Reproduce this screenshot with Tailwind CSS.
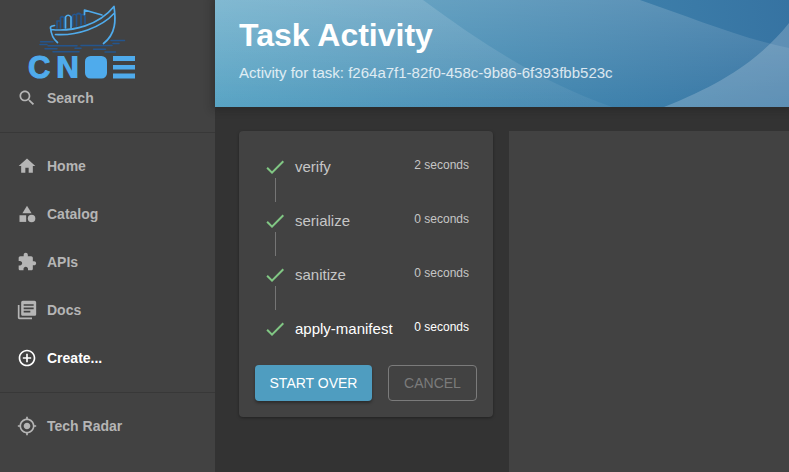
<!DOCTYPE html>
<html lang="en">
<head>
<meta charset="utf-8">
<meta name="viewport" content="width=device-width, initial-scale=1">
<title>Task Activity</title>
<script src="https://cdn.jsdelivr.net/npm/@tailwindcss/browser@4"></script>
</head>
<body class="flex min-h-screen overflow-x-hidden bg-[#333333] font-['Liberation_Sans',Arial,sans-serif] text-sm text-white">

<aside class="w-[215px] shrink-0 bg-[#424242] font-bold text-[#b5b5b5]">
  <a href="#" aria-label="CNOE" class="block h-[74px]">
    <svg class="block overflow-visible" width="150" height="80" viewBox="0 0 150 80" fill="none" stroke-width="1.7" stroke-linecap="round" stroke-linejoin="round">
      <g stroke="#24558d">
        <path d="M57 28V21h3M60.500 28V17.500q1.500-1.500 3.500 0V28M72.500 26V15.500q2-2.500 4 0V26M76.500 14.500q2-2 4.500 0V25M81 15q3-1.500 4 1.500v7"/>
        <path stroke-width="1.500" d="M40.500 41.800h12.500M40 44.500h7M48 45.700h29M81 45.500h31M45 48.700h12M75 48.300h6M53 51.800h26M93.500 49.200h12M105 52h10.500M111 40.500h13.500M113 43.500h6"/>
      </g>
      <g stroke="#4fabec">
        <path d="M50.500 27.500C51 34 53 39 57.500 42.500M54.500 25.500l-3 .8q-1.500.7-1 2.200M51 29.500C73 32 99 25 114 6.500C116 20 116 34 103.500 43.500M55.500 34.500C76 36 101 28 114.500 13"/>
        <path d="M65.500 28V17q2.500-3.500 5.500 0V28M84.500 14.500V10l17.500 5"/>
      </g>
      <g fill="#4fabec">
        <text x="28" y="78" font-family="Liberation Sans, Arial, sans-serif" font-size="31" font-weight="700" stroke="#4fabec" stroke-width="1">C</text>
        <text x="55" y="78" font-family="DejaVu Sans, sans-serif" font-size="30" font-weight="700">N</text>
        <rect x="85" y="56" width="22" height="22.500" rx="5.500"/>
        <rect x="113" y="56" width="22" height="5"/>
        <rect x="113" y="65" width="22" height="4.500"/>
        <rect x="113" y="73.500" width="22" height="5"/>
      </g>
    </svg>
  </a>
  <button type="button" class="flex h-12 w-full items-center gap-2.5 pl-[17px] font-bold">
    <svg class="size-5" viewBox="0 0 24 24" fill="currentColor"><path d="M15.500 14h-.79l-.28-.27C15.410 12.590 16 11.110 16 9.500 16 5.910 13.090 3 9.500 3S3 5.910 3 9.500 5.910 16 9.500 16c1.610 0 3.090-.59 4.230-1.570l.27.28v.79l5 4.990L20.490 19l-4.990-5zm-6 0C7.010 14 5 11.990 5 9.500S7.010 5 9.500 5 14 7.010 14 9.500 11.990 14 9.500 14z"/></svg>
    Search
  </button>
  <hr class="mt-2.5 h-2.5 border-t border-[#383838]">
  <nav aria-label="Main">
    <a href="#" class="flex h-12 items-center gap-2.5 pl-[17px]">
      <svg class="size-5" viewBox="0 0 24 24" fill="currentColor"><path d="M10 20v-6h4v6h5v-8h3L12 3 2 12h3v8z"/></svg>
      Home
    </a>
    <a href="#" class="flex h-12 items-center gap-2.5 pl-[17px]">
      <svg class="size-5" viewBox="0 0 24 24" fill="currentColor"><path d="M12 2l-5.500 9h11z"/><circle cx="17.500" cy="17.500" r="4.500"/><path d="M3 13.500h8v8H3z"/></svg>
      Catalog
    </a>
    <a href="#" class="flex h-12 items-center gap-2.5 pl-[17px]">
      <svg class="size-5" viewBox="0 0 24 24" fill="currentColor"><path d="M20.500 11H19V7c0-1.100-.9-2-2-2h-4V3.500C13 2.120 11.880 1 10.500 1S8 2.120 8 3.500V5H4c-1.100 0-1.990.9-1.990 2v3.800H3.500c1.490 0 2.700 1.210 2.700 2.700s-1.210 2.700-2.700 2.700H2V20c0 1.100.9 2 2 2h3.800v-1.500c0-1.490 1.210-2.700 2.700-2.700 1.490 0 2.700 1.210 2.700 2.700V22H17c1.100 0 2-.9 2-2v-4h1.500c1.380 0 2.500-1.120 2.500-2.500S21.880 11 20.500 11z"/></svg>
      APIs
    </a>
    <a href="#" class="flex h-12 items-center gap-2.5 pl-[17px]">
      <svg class="size-5" viewBox="0 0 24 24" fill="currentColor"><path d="M3 6H1v15c0 1.100.9 2 2 2h15v-2H3V6z"/><path d="M21 1H7c-1.100 0-2 .9-2 2v14c0 1.100.9 2 2 2h14c1.100 0 2-.9 2-2V3c0-1.100-.9-2-2-2zm-1 10H8V9h12v2zm-4 4H8v-2h8v2zm4-8H8V5h12v2z"/></svg>
      Docs
    </a>
    <a href="#" aria-current="page" class="flex h-12 items-center gap-2.5 pl-[17px] text-white">
      <svg class="size-5" viewBox="0 0 24 24" fill="currentColor"><path d="M13 7h-2v4H7v2h4v4h2v-4h4v-2h-4V7zm-1-5C6.480 2 2 6.480 2 12s4.480 10 10 10 10-4.480 10-10S17.520 2 12 2zm0 18c-4.410 0-8-3.590-8-8s3.590-8 8-8 8 3.590 8 8-3.590 8-8 8z"/></svg>
      Create...
    </a>
    <hr class="mt-2.5 h-2.5 border-t border-[#383838]">
    <a href="#" class="flex h-12 items-center gap-2.5 pl-[17px]">
      <svg class="size-5" viewBox="0 0 24 24" fill="currentColor"><path d="M12 8c-2.210 0-4 1.790-4 4s1.790 4 4 4 4-1.790 4-4-1.790-4-4-4zm8.940 3c-.46-4.170-3.770-7.480-7.940-7.940V1h-2v2.060C6.830 3.520 3.520 6.830 3.060 11H1v2h2.060c.46 4.170 3.770 7.480 7.940 7.940V23h2v-2.060c4.170-.46 7.480-3.770 7.940-7.940H23v-2h-2.060zM12 19c-3.870 0-7-3.130-7-7s3.130-7 7-7 7 3.130 7 7-3.130 7-7 7z"/></svg>
      Tech Radar
    </a>
  </nav>
</aside>

<div class="flex min-w-0 flex-1 flex-col">
  <header class="relative bg-[#4589b3] px-6 pt-4 pb-6 shadow-[0_0_8px_3px_rgba(20,20,20,0.3)]">
    <svg class="absolute inset-0 size-full" viewBox="0 0 574 107" preserveAspectRatio="none" aria-hidden="true">
      <defs>
        <linearGradient id="base" gradientUnits="userSpaceOnUse" x1="0" y1="107" x2="574" y2="0">
          <stop offset="0" stop-color="#509fc1"/><stop offset="1" stop-color="#3673a2"/>
        </linearGradient>
        <linearGradient id="fade" x1="0" y1="0" x2="0" y2="1">
          <stop offset="0" stop-color="#fff" stop-opacity=".17"/><stop offset="1" stop-color="#fff" stop-opacity="0"/>
        </linearGradient>
        <linearGradient id="fade2" x1="0" y1="0" x2="0" y2="1">
          <stop offset="0" stop-color="#fff" stop-opacity=".14"/><stop offset="1" stop-color="#fff" stop-opacity=".05"/>
        </linearGradient>
      </defs>
      <path fill="url(#base)" d="M0 0H574V107H0z"/>
      <path fill="url(#fade)" d="M0 0H425C475 17 525 38 574 48V107H0z"/>
      <path fill="url(#fade2)" d="M0 0H208C270 46 330 84 397 107H0z"/>
      <path fill="#fff" fill-opacity=".2" d="M449 107C510 83 547 57 574 23V107z"/>
    </svg>
    <div class="relative">
      <h1 class="text-[32px] leading-[38px] font-bold">Task Activity</h1>
      <p class="mt-2 leading-[21px] text-[15px] text-white/80">Activity for task: f264a7f1-82f0-458c-9b86-6f393fbb523c</p>
    </div>
  </header>

  <main class="flex flex-1 items-start gap-4 pt-6 pl-6">
    <section aria-label="Steps" class="w-[254px] shrink-0 rounded bg-[#424242] pb-4 shadow-[0_1px_3px_rgba(0,0,0,0.35)]">
      <ol class="px-6 pt-6 pb-6 text-[15px] text-[#c6c6c6]">
        <li>
          <div class="flex h-6 items-center gap-2">
            <svg class="size-6 text-[#81c784]" viewBox="0 0 24 24" fill="currentColor"><path d="M9 16.170L4.830 12l-1.420 1.410L9 19 21 7l-1.410-1.410z"/></svg>
            <span class="flex-1">verify</span><span class="self-start text-xs leading-5">2 seconds</span>
          </div>
          <div class="-mt-px mb-[7px] ml-3 h-6 w-px bg-[#757575]"></div>
        </li>
        <li>
          <div class="flex h-6 items-center gap-2">
            <svg class="size-6 text-[#81c784]" viewBox="0 0 24 24" fill="currentColor"><path d="M9 16.170L4.830 12l-1.420 1.410L9 19 21 7l-1.410-1.410z"/></svg>
            <span class="flex-1">serialize</span><span class="self-start text-xs leading-5">0 seconds</span>
          </div>
          <div class="-mt-px mb-[7px] ml-3 h-6 w-px bg-[#757575]"></div>
        </li>
        <li>
          <div class="flex h-6 items-center gap-2">
            <svg class="size-6 text-[#81c784]" viewBox="0 0 24 24" fill="currentColor"><path d="M9 16.170L4.830 12l-1.420 1.410L9 19 21 7l-1.410-1.410z"/></svg>
            <span class="flex-1">sanitize</span><span class="self-start text-xs leading-5">0 seconds</span>
          </div>
          <div class="-mt-px mb-[7px] ml-3 h-6 w-px bg-[#757575]"></div>
        </li>
        <li class="text-white">
          <div class="flex h-6 items-center gap-2">
            <svg class="size-6 text-[#81c784]" viewBox="0 0 24 24" fill="currentColor"><path d="M9 16.170L4.830 12l-1.420 1.410L9 19 21 7l-1.410-1.410z"/></svg>
            <span class="flex-1">apply-manifest</span><span class="self-start text-xs leading-5">0 seconds</span>
          </div>
        </li>
      </ol>
      <div class="flex gap-4 px-4">
        <button type="button" class="h-9 w-[117px] rounded bg-[#4f9dc0] shadow-[0_2px_3px_rgba(0,0,0,0.35)]">START OVER</button>
        <button type="button" disabled class="h-9 w-[89px] rounded border border-[#7b7b7b] text-[#7b7b7b]">CANCEL</button>
      </div>
    </section>
    <section aria-label="Log" class="flex-1 self-stretch bg-[#424242]"></section>
  </main>
</div>
</body>
</html>
